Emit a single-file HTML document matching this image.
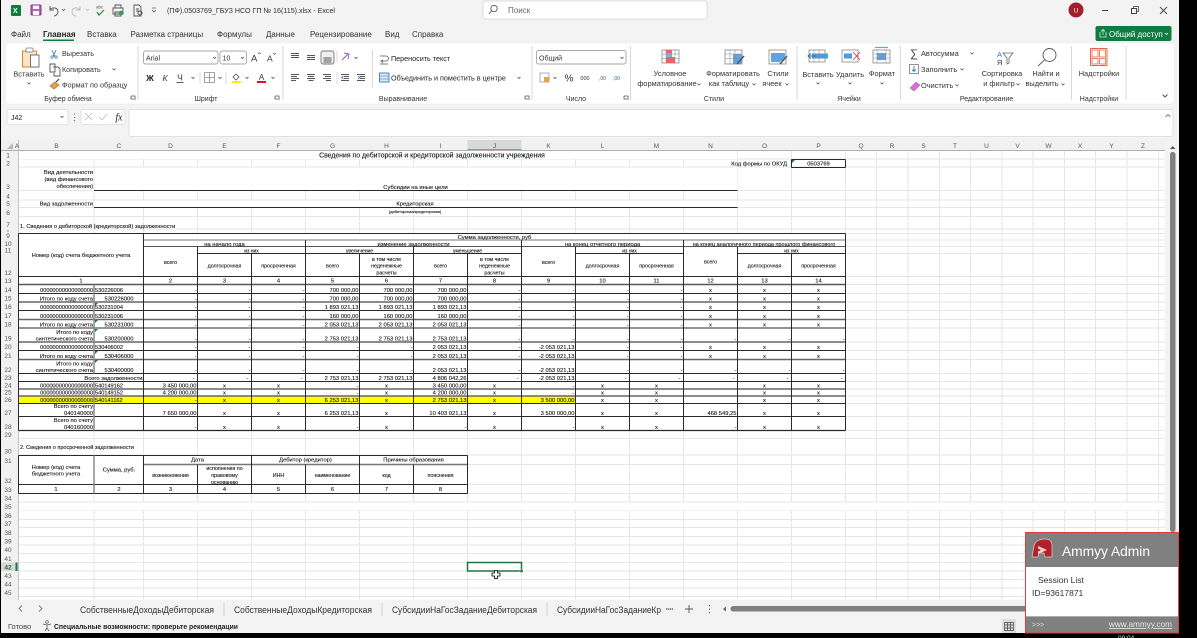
<!DOCTYPE html>
<html lang="ru"><head><meta charset="utf-8"><title>Excel</title>
<style>
html,body{margin:0;padding:0;background:#000;width:1197px;height:638px;overflow:hidden}
svg{display:block;filter:blur(.3px)}
text{font-family:"Liberation Sans","Noto Sans CJK SC",sans-serif;fill:#222;font-size:5.8px}
.r{text-anchor:end}.c{text-anchor:middle}
.mm text{font-size:8px;fill:#333}
.m text{font-size:7.4px;fill:#333}
.h text{font-size:6.5px;fill:#555;text-anchor:middle}
.g line{stroke:#e6e6e6;stroke-width:1}
.t line{stroke:#2a2a2a;stroke-width:1}
.i{fill:none;stroke:#555;stroke-width:.9}
.ch{fill:none;stroke:#555;stroke-width:.8}
.sp{stroke:#d8d8d8;stroke-width:1;fill:none}
.s text{fill:#111;stroke:#222;stroke-width:.12px}
</style></head><body>
<svg xmlns="http://www.w3.org/2000/svg" width="1197" height="638" viewBox="0 0 1197 638">
<rect width="1197" height="638" fill="#000"/>
<rect x="1" y="0" width="1178" height="633" fill="#f3f3f3"/>

<!-- title bar -->
<rect x="11" y="5" width="10" height="11" rx="1" fill="#107c41"/><text x="13" y="13" style="font-size:7px;font-weight:bold;fill:#fff">X</text>
<rect x="31" y="5" width="10" height="10" rx="1" fill="#b565b5" stroke="#8b2f8b"/><rect x="33" y="5.5" width="6" height="3.5" fill="#fff"/><rect x="33" y="11" width="6" height="4" fill="#fff"/>
<path class="i" d="M50 6v4h4M50 10c2-3 8-3 8 2 0 2-2 4-4 4" stroke-width="1.1"/>
<path class="ch" d="M62 9l1.5 1.5L65 9"/>
<path class="i" style="stroke:#bbb" d="M80 6v4h-4M80 10c-2-3-8-3-8 2 0 2 2 4 4 4"/>
<path class="ch" style="stroke:#bbb" d="M86 9l1.5 1.5L89 9"/>
<text x="96" y="8.5" style="font-size:4.5px;fill:#555">abc</text><path d="M97 12l2 3 5-5" fill="none" stroke="#2a8a3a" stroke-width="1.2"/>
<path class="i" d="M115 8V5h6v3M113 8h10v6h-10zM115 12h6v4h-6z"/><circle cx="121" cy="13" r="2.3" fill="#3a9a5a"/>
<path class="i" d="M134 5h5l2 2v9h-7zM136 9h3M136 11h3"/><circle cx="140" cy="13" r="2" fill="none" stroke="#555"/>
<path d="M152 8h4M152 10l2 2 2-2" fill="none" stroke="#555" stroke-width=".8"/>
<text x="167" y="13" textLength="168" lengthAdjust="spacingAndGlyphs" style="font-size:7.4px;fill:#333">(ПФ).0503769_ГБУЗ НСО ГП № 16(115).xlsx  -  Excel</text>
<rect x="483" y="1" width="224" height="18" rx="2" fill="#fff" stroke="#dcdcdc"/>
<circle cx="494" cy="8.5" r="3.2" class="i"/><path class="i" d="M491.5 11l-2.5 3"/>
<text x="508" y="13" style="font-size:8px;fill:#666">Поиск</text>
<circle cx="1076" cy="10" r="7.5" fill="#a11f2d"/><text x="1076" y="12.5" class="c" style="font-size:6.5px;fill:#fff">U</text>
<path d="M1102 10.500h6" stroke="#444" stroke-width="1"/>
<rect x="1131.500" y="8.500" width="5" height="5" fill="none" stroke="#444"/><path d="M1133.500 8.500v-2h5v5h-2" fill="none" stroke="#444" stroke-width=".8"/>
<path d="M1160 7l7 7M1167 7l-7 7" stroke="#444" stroke-width=".9"/>

<!-- menu -->
<g class="mm">
<text x="11" y="37">Файл</text><text x="43" y="37" style="font-weight:bold;fill:#222">Главная</text><text x="87" y="37">Вставка</text><text x="130.500" y="37">Разметка страницы</text><text x="217" y="37">Формулы</text><text x="266" y="37">Данные</text><text x="310" y="37">Рецензирование</text><text x="385" y="37">Вид</text><text x="412" y="37">Справка</text>
</g>
<rect x="43" y="39.500" width="31" height="1.500" fill="#107c41"/>
<rect x="1095.500" y="26" width="76" height="15" rx="2" fill="#107c41"/>
<path d="M1100 32v5h6v-5M1103 35v-5M1101 31.500l2-2 2 2" fill="none" stroke="#cfe8da" stroke-width=".8"/>
<text x="1109" y="37" style="font-size:8px;fill:#fff">Общий доступ</text><path d="M1165 33l1.500 1.500 1.500-1.500" fill="none" stroke="#fff" stroke-width=".8"/>

<!-- ribbon -->
<rect x="5.500" y="43" width="1169" height="61" rx="4" fill="#fff" stroke="#e8e8e8" stroke-width=".5"/>
<path class="sp" d="M138 46v54M283 46v54M532 46v54M630.500 46v54M797 46v54M900.500 46v54M1071.500 46v54M1126 46v54"/><path class="sp" d="M372.500 50v38M200 72v12M226 72v12M337 72v12M337 51v11"/>
<g class="m">
<!-- clipboard -->
<path d="M22.500 51h14v16h-14z" fill="#fbe3c4" stroke="#d08a30"/><rect x="26" y="48" width="7" height="4" rx="1" fill="#fff" stroke="#777" stroke-width=".7"/><rect x="30.500" y="55" width="8.500" height="12" fill="#fff" stroke="#555" stroke-width=".8"/>
<text x="29" y="76.500" class="c">Вставить</text><path class="ch" d="M27.500 82.500l1.500 1.500 1.500-1.500"/>
<path d="M52 50l3 7M56 50l-3 7" stroke="#356fa8" stroke-width=".8" fill="none"/><circle cx="52" cy="57" r="1.200" fill="none" stroke="#356fa8" stroke-width=".7"/><circle cx="56" cy="57" r="1.200" fill="none" stroke="#356fa8" stroke-width=".7"/>
<text x="62" y="56" style="font-size:7.200px">Вырезать</text>
<path class="i" d="M50 64h5v8h-5zM53 67h5l2 2v7h-6v-3"/>
<text x="62" y="72" style="font-size:7.200px">Копировать</text><path class="ch" d="M112.500 68.500l1.500 1.500 1.500-1.500"/>
<path d="M50 86l5-4 4 3-5 4z" fill="#e8a04a" stroke="#a85c10" stroke-width=".6"/><path d="M56 82l3-3" stroke="#444" stroke-width="1.200"/>
<text x="62" y="87.500" style="font-size:7.300px">Формат по образцу</text>
<text x="68" y="101" class="c" style="font-size:7px">Буфер обмена</text>
<path class="ch" d="M131 96h4v4M131 96v3h3"/>
<!-- font -->
<rect x="143.500" y="51" width="74.500" height="13" rx="2" fill="#fff" stroke="#8a8a8a" stroke-width=".7"/><text x="146" y="60.500" style="font-size:7px">Arial</text><path class="ch" d="M213 57l1.500 1.500 1.500-1.500"/>
<rect x="220" y="51" width="26.500" height="13" rx="2" fill="#fff" stroke="#8a8a8a" stroke-width=".7"/><text x="222.500" y="60.500" style="font-size:7px">10</text><path class="ch" d="M241 57l1.500 1.500 1.500-1.500"/>
<text x="251" y="61.500" style="font-size:9.500px">A</text><path d="M258 54l1.300-1.500 1.300 1.500" fill="none" stroke="#2b6cb0" stroke-width=".7"/>
<text x="267" y="61.500" style="font-size:8.500px">A</text><path d="M273 53l1.300 1.500 1.300-1.500" fill="none" stroke="#2b6cb0" stroke-width=".7"/>
<text x="150" y="81" class="c" style="font-weight:bold;font-size:8.500px;fill:#222">Ж</text><text x="165" y="81" class="c" style="font-style:italic;font-size:8.500px">К</text><text x="180" y="80.500" class="c" style="font-size:8.500px">Ч</text><path d="M176.500 82.500h7" stroke="#333" stroke-width=".8"/>
<path class="ch" d="M191.500 77l1.500 1.500 1.500-1.500M218.500 77l1.500 1.500 1.500-1.500M245.500 77l1.500 1.500 1.500-1.500M271.500 77l1.500 1.500 1.500-1.500"/>
<path d="M204.500 72.500h10v10h-10zM209.500 72.500v10M204.500 77.500h10" fill="none" stroke="#8a8a8a" stroke-width=".8"/>
<path d="M233 77l3-3 3 3-3 3z" fill="none" stroke="#555" stroke-width=".8"/><rect x="232" y="81" width="9" height="2" fill="#ffee00"/>
<text x="261.500" y="80" class="c" style="font-size:8px">A</text><rect x="257" y="81" width="9" height="2" fill="#d8141c"/>
<text x="206" y="101" class="c" style="font-size:7px">Шрифт</text><path class="ch" d="M275 96h4v4M275 96v3h3"/>
<!-- align -->
<g stroke="#555" stroke-width=".9" fill="none">
<path d="M291 53.500h8M291 55.500h8M291 57.500h8"/>
<path d="M307 55.500h8M307 57.500h8M307 59.500h8"/>
<rect x="321" y="51" width="13" height="13" rx="2" fill="#eee" stroke="#777"/><path d="M323.500 58h8M323.500 60h8M323.500 62h8"/>
<path d="M342 60l6-6M344 53l5 1-1 5" stroke="#8060a0"/><path class="ch" d="M354.500 57l1.500 1.500 1.500-1.500"/>
<path d="M291 74.500h8M291 76.500h6M291 78.500h8M291 80.500h5M307 74.500h8M308 76.500h6M307 78.500h8M308.500 80.500h5M323 74.500h8M325 76.500h6M323 78.500h8M326 80.500h5"/>
<path d="M341 74.500h8M344 76.500h5M344 78.500h5M341 80.500h8M357 74.500h8M360 76.500h5M360 78.500h5M357 80.500h8"/></g>
<path d="M343.500 76l-2 1.500 2 1.500M358 76l2 1.500-2 1.500" fill="none" stroke="#2b7cd3" stroke-width=".8"/>
<path d="M380 56h6a2 2 0 010 5h-4M380 64h8M383 60l-2 1 2 2" fill="none" stroke="#555" stroke-width=".8"/>
<text x="391" y="61" style="font-size:7.200px;fill:#222">Переносить текст</text>
<rect x="379.500" y="73" width="9.500" height="9" fill="#dbe9f8" stroke="#2b6cb0" stroke-width=".8"/><path d="M379.500 76h9.500M379.500 79h9.500" stroke="#2b6cb0" stroke-width=".6"/>
<text x="391" y="80.500" style="font-size:7.200px;fill:#222">Объединить и поместить в центре</text><path class="ch" d="M517.500 77l1.500 1.500 1.500-1.500"/>
<text x="403" y="101" class="c" style="font-size:7px">Выравнивание</text><path class="ch" d="M525 96h4v4M525 96v3h3"/>
<!-- number -->
<rect x="536.500" y="50.500" width="89.500" height="13.500" rx="2" fill="#fff" stroke="#8a8a8a" stroke-width=".7"/><text x="539" y="60.500" style="font-size:7px">Общий</text><path class="ch" d="M620.500 57l1.500 1.500 1.500-1.500"/>
<rect x="540" y="73" width="9" height="9" fill="#fff" stroke="#777" stroke-width=".6"/><rect x="544" y="77" width="5" height="5" fill="#e8a04a"/><path class="ch" d="M553.500 77l1.500 1.500 1.500-1.500"/>
<text x="569" y="81.500" class="c" style="font-size:10px">%</text><text x="585" y="80" class="c" style="font-size:5.500px">000</text>
<text x="599" y="80" style="font-size:5px;fill:#456">,00</text><text x="613" y="80" style="font-size:5px;fill:#2b6cb0">,00</text>
<text x="576" y="101" class="c" style="font-size:7px">Число</text><path class="ch" d="M624 96h4v4M624 96v3h3"/>
<!-- styles -->
<g><rect x="662" y="50" width="17" height="13" fill="#fff" stroke="#777" stroke-width=".7"/><rect x="666" y="50" width="6" height="3" fill="#f2626c"/><rect x="666" y="53" width="6" height="4" fill="#7cb8e8"/><rect x="666" y="57" width="9" height="6" fill="#f2626c"/><path d="M662 54h17M662 58.500h17M666 50v13M671 50v13M675 50v13" stroke="#888" stroke-width=".5"/></g>
<text x="670" y="76" class="c">Условное</text><text x="667" y="86" class="c">форматирование</text><path class="ch" d="M697.500 83.500l1.500 1.500 1.500-1.500"/>
<g><rect x="725" y="50" width="17" height="14" fill="#fff" stroke="#777" stroke-width=".7"/><rect x="733" y="54" width="9" height="10" fill="#5ea4e4"/><path d="M725 54h17M725 58.500h17M730 50v14M735 50v14" stroke="#888" stroke-width=".5"/><path d="M737 64l7-8" stroke="#555" stroke-width="1.500"/></g>
<text x="733" y="76" class="c">Форматировать</text><text x="729" y="86" class="c">как таблицу</text><path class="ch" d="M752.500 83.500l1.500 1.500 1.500-1.500"/>
<g><rect x="769" y="50" width="17" height="14" fill="#fff" stroke="#777" stroke-width=".7"/><path d="M771 53h14v5l-5 4h-9z" fill="#5ea4e4"/><path d="M780 64l7-8" stroke="#555" stroke-width="1.500"/></g>
<text x="778" y="76" class="c">Стили</text><text x="772" y="86" class="c">ячеек</text><path class="ch" d="M785.500 83.500l1.500 1.500 1.500-1.500"/>
<text x="714" y="101" class="c" style="font-size:7px">Стили</text>
<!-- cells -->
<rect x="809" y="50" width="16" height="12" fill="#fff" stroke="#777" stroke-width=".7"/><rect x="812" y="53.500" width="16" height="5" fill="#4a9de0"/><path d="M816 56h-7M811 53.500L808 56l3 2.500" fill="none" stroke="#1a6fb8" stroke-width=".9"/><path d="M809 54h16M809 58h16M814 50v12M819 50v12" stroke="#888" stroke-width=".5"/>
<text x="818" y="77" class="c">Вставить</text><path class="ch" d="M816.500 82.500l1.500 1.500 1.500-1.500"/>
<rect x="842" y="50" width="16" height="12" fill="#fff" stroke="#777" stroke-width=".7"/><rect x="844" y="53.500" width="8" height="5" fill="#4a9de0"/><path d="M853 52l7 8M860 52l-7 8" stroke="#e0303a" stroke-width=".8"/>
<text x="850" y="77" class="c">Удалить</text><path class="ch" d="M848.500 82.500l1.500 1.500 1.500-1.500"/>
<rect x="873" y="50" width="17" height="13" fill="#fff" stroke="#777" stroke-width=".7"/><rect x="877" y="53" width="9" height="7" fill="#5ea4e4"/><path d="M875 47.500h13" stroke="#5ea4e4" stroke-width="1.200"/><path d="M873 54h17M873 58h17M877 50v13M886 50v13" stroke="#888" stroke-width=".5"/>
<text x="882" y="76" class="c">Формат</text><path class="ch" d="M880.500 82.500l1.500 1.500 1.500-1.500"/>
<text x="849" y="101" class="c" style="font-size:7px">Ячейки</text>
<!-- editing -->
<text x="914" y="57" class="c" style="font-size:11px">∑</text><text x="921" y="56">Автосумма</text><path class="ch" d="M970.500 52.500l1.500 1.500 1.500-1.500"/>
<rect x="909.500" y="64.500" width="9" height="9" fill="#fff" stroke="#666" stroke-width=".7"/><path d="M914 66v5M912 69.500l2 2 2-2" fill="none" stroke="#2b7cd3" stroke-width=".9"/>
<text x="921" y="72">Заполнить</text><path class="ch" d="M960.500 68.500l1.500 1.500 1.500-1.500"/>
<path d="M910 88l6-6 4 3-6 6z" fill="#d86ed8" stroke="#a040a0" stroke-width=".5"/>
<text x="921" y="88">Очистить</text><path class="ch" d="M955.500 84.500l1.500 1.500 1.500-1.500"/>
<text x="997" y="57" style="font-size:7.500px;fill:#2b7cd3">А</text><text x="997" y="65" style="font-size:7.500px">Я</text><path d="M1003 53h10l-4 5v5l-2 1v-6z" fill="none" stroke="#666" stroke-width=".8"/>
<text x="1002" y="76" class="c">Сортировка</text><text x="999" y="86" class="c">и фильтр</text><path class="ch" d="M1016.500 83.500l1.500 1.500 1.500-1.500"/>
<circle cx="1049.500" cy="55" r="6.500" class="i"/><path class="i" d="M1044.500 60l-6.500 6"/>
<text x="1046" y="76" class="c">Найти и</text><text x="1042" y="86" class="c">выделить</text><path class="ch" d="M1061.500 83.500l1.500 1.500 1.500-1.500"/>
<text x="986.500" y="101" class="c" style="font-size:7px">Редактирование</text>
<!-- addins -->
<rect x="1090.500" y="48.500" width="16.500" height="17" fill="#fff" stroke="#e06a40"/><rect x="1092" y="50" width="6" height="7" fill="none" stroke="#e06a40" stroke-width=".8"/><rect x="1099.500" y="50" width="6" height="7" fill="none" stroke="#e06a40" stroke-width=".8"/><rect x="1092" y="58.500" width="6" height="5.500" fill="none" stroke="#e06a40" stroke-width=".8"/><rect x="1099.500" y="58.500" width="6" height="5.500" fill="none" stroke="#e06a40" stroke-width=".8"/>
<text x="1099" y="76" class="c">Надстройки</text><text x="1099" y="101" class="c" style="font-size:7px">Надстройки</text>
<path d="M1162.500 94.500l2.500 2.500 2.500-2.500" fill="none" stroke="#555"/>
</g>

<!-- formula bar -->
<rect x="7" y="109.500" width="61" height="15" rx="2" fill="#fff" stroke="#e0e0e0"/><text x="11" y="120" style="font-size:7px">J42</text><path class="ch" d="M60.500 116l1.500 1.500 1.500-1.500"/>
<path d="M74.500 113.500v1M74.500 117v1M74.500 120v1" stroke="#555"/>
<rect x="81" y="109.500" width="44" height="15" rx="2" fill="#fff" stroke="#e0e0e0"/>
<path d="M85 113l7 7M92 113l-7 7" stroke="#bbb" stroke-width=".8"/><path d="M99 117l3 3 5-6" fill="none" stroke="#bbb" stroke-width=".8"/>
<text x="119" y="120.500" class="c" style="font-family:'Liberation Serif',serif;font-style:italic;font-size:10px">fx</text>
<rect x="129" y="109.500" width="1044" height="27" rx="2" fill="#fff" stroke="#e0e0e0"/>
<path d="M1165.500 117l2.500-2.500 2.500 2.500" fill="none" stroke="#666" stroke-width=".8"/>

<!-- headers -->
<rect x="1" y="140" width="1164" height="11" fill="#f1f1f1"/>
<rect x="1" y="150" width="17" height="450" fill="#f1f1f1"/>
<rect x="18" y="151" width="1147" height="449" fill="#fff"/>
<rect x="467.500" y="140" width="54" height="10.500" fill="#d9d9d9"/>
<rect x="467.500" y="149.500" width="54" height="1.500" fill="#217346"/>
<rect x="1" y="562.500" width="17" height="8.500" fill="#d9d9d9"/><rect x="15.500" y="562.500" width="2" height="8.500" fill="#217346"/>
<path d="M13 149v-6l-6 6z" fill="#b5b5b5"/>
<path d="M1 150.500h1164" stroke="#b0b0b0"/><path d="M18.500 140v460" stroke="#c4c4c4"/>
<g class="h">
<text x="17" y="148">A</text><text x="56.500" y="148">B</text><text x="118.800" y="148">C</text><text x="170.500" y="148">D</text><text x="224.500" y="148">E</text><text x="278.500" y="148">F</text><text x="332.500" y="148">G</text><text x="386.500" y="148">H</text><text x="440.500" y="148">I</text><text x="494.500" y="148" style="fill:#1d6b40">J</text><text x="548.500" y="148">K</text><text x="602.500" y="148">L</text><text x="656.500" y="148">M</text><text x="710.500" y="148">N</text><text x="764.500" y="148">O</text><text x="818.500" y="148">P</text><text x="861" y="148">Q</text><text x="892" y="148">R</text><text x="923.500" y="148">S</text><text x="955" y="148">T</text><text x="986.500" y="148">U</text><text x="1017.500" y="148">V</text><text x="1048.500" y="148">W</text><text x="1080" y="148">X</text><text x="1111.500" y="148">Y</text><text x="1143" y="148">Z</text>
<text x="8" y="157.500">1</text><text x="8" y="165.500">2</text><text x="8" y="189">3</text><text x="8" y="198.500">4</text><text x="8" y="206">5</text><text x="8" y="215">6</text><text x="8" y="227">7</text><text x="8" y="232" style="font-size:3px">8</text><text x="8" y="238">9</text><text x="8" y="246">10</text><text x="8" y="252.500">11</text><text x="8" y="275">12</text><text x="8" y="283">13</text><text x="8" y="292">14</text><text x="8" y="300.500">15</text><text x="8" y="309">16</text><text x="8" y="318">17</text><text x="8" y="326.500">18</text><text x="8" y="340.500">19</text><text x="8" y="349">20</text><text x="8" y="358">21</text><text x="8" y="372">22</text><text x="8" y="380">23</text><text x="8" y="387.500">24</text><text x="8" y="394.500">25</text><text x="8" y="402">26</text><text x="8" y="415">27</text><text x="8" y="429">28</text><text x="8" y="437">29</text><text x="8" y="453.500">30</text><text x="8" y="463">31</text><text x="8" y="483">32</text><text x="8" y="492">33</text><text x="8" y="500.500">34</text><text x="8" y="509">35</text><text x="8" y="518">36</text><text x="8" y="526">37</text><text x="8" y="535">38</text><text x="8" y="543.500">39</text><text x="8" y="552">40</text><text x="8" y="561">41</text><text x="8" y="569.500" style="fill:#1d6b40;font-weight:bold">42</text><text x="8" y="578">43</text><text x="8" y="586.500">44</text><text x="8" y="595">45</text>
</g>

<!-- gridlines -->
<g class="g">
<line x1="94" x2="94" y1="151" y2="600"/><line x1="143.500" x2="143.500" y1="151" y2="600"/><line x1="197.500" x2="197.500" y1="151" y2="600"/><line x1="251.500" x2="251.500" y1="151" y2="600"/><line x1="305.500" x2="305.500" y1="151" y2="600"/><line x1="359.500" x2="359.500" y1="151" y2="600"/><line x1="413.500" x2="413.500" y1="151" y2="600"/><line x1="467.500" x2="467.500" y1="151" y2="600"/><line x1="521.500" x2="521.500" y1="151" y2="600"/><line x1="575.500" x2="575.500" y1="151" y2="600"/><line x1="629.500" x2="629.500" y1="151" y2="600"/><line x1="683.500" x2="683.500" y1="151" y2="600"/><line x1="737.500" x2="737.500" y1="151" y2="600"/><line x1="791.500" x2="791.500" y1="151" y2="600"/><line x1="845.500" x2="845.500" y1="151" y2="600"/><line x1="876.500" x2="876.500" y1="151" y2="600"/><line x1="908" x2="908" y1="151" y2="600"/><line x1="939.500" x2="939.500" y1="151" y2="600"/><line x1="970.500" x2="970.500" y1="151" y2="600"/><line x1="1002" x2="1002" y1="151" y2="600"/><line x1="1033" x2="1033" y1="151" y2="600"/><line x1="1064.500" x2="1064.500" y1="151" y2="600"/><line x1="1095.500" x2="1095.500" y1="151" y2="600"/><line x1="1127" x2="1127" y1="151" y2="600"/><line x1="1158.500" x2="1158.500" y1="151" y2="600"/>
<line x1="19" x2="1165" y1="159" y2="159"/><line x1="19" x2="1165" y1="167" y2="167"/><line x1="19" x2="1165" y1="190.500" y2="190.500"/><line x1="19" x2="1165" y1="200" y2="200"/><line x1="19" x2="1165" y1="207.500" y2="207.500"/><line x1="19" x2="1165" y1="216.500" y2="216.500"/><line x1="19" x2="1165" y1="229" y2="229"/><line x1="19" x2="1165" y1="233.500" y2="233.500"/><line x1="19" x2="1165" y1="240" y2="240"/><line x1="19" x2="1165" y1="246.500" y2="246.500"/><line x1="19" x2="1165" y1="253.500" y2="253.500"/><line x1="19" x2="1165" y1="276.500" y2="276.500"/><line x1="19" x2="1165" y1="284.500" y2="284.500"/><line x1="19" x2="1165" y1="293.500" y2="293.500"/><line x1="19" x2="1165" y1="302" y2="302"/><line x1="19" x2="1165" y1="310.500" y2="310.500"/><line x1="19" x2="1165" y1="319.500" y2="319.500"/><line x1="19" x2="1165" y1="328" y2="328"/><line x1="19" x2="1165" y1="342" y2="342"/><line x1="19" x2="1165" y1="350.500" y2="350.500"/><line x1="19" x2="1165" y1="359.500" y2="359.500"/><line x1="19" x2="1165" y1="373.500" y2="373.500"/><line x1="19" x2="1165" y1="381.500" y2="381.500"/><line x1="19" x2="1165" y1="389" y2="389"/><line x1="19" x2="1165" y1="396" y2="396"/><line x1="19" x2="1165" y1="403.500" y2="403.500"/><line x1="19" x2="1165" y1="416.500" y2="416.500"/><line x1="19" x2="1165" y1="430.500" y2="430.500"/><line x1="19" x2="1165" y1="438.500" y2="438.500"/><line x1="19" x2="1165" y1="455" y2="455"/><line x1="19" x2="1165" y1="464.500" y2="464.500"/><line x1="19" x2="1165" y1="484.500" y2="484.500"/><line x1="19" x2="1165" y1="493.500" y2="493.500"/><line x1="19" x2="1165" y1="502" y2="502"/><line x1="19" x2="1165" y1="510.500" y2="510.500"/><line x1="19" x2="1165" y1="519.500" y2="519.500"/><line x1="19" x2="1165" y1="527.500" y2="527.500"/><line x1="19" x2="1165" y1="536.500" y2="536.500"/><line x1="19" x2="1165" y1="545" y2="545"/><line x1="19" x2="1165" y1="553.500" y2="553.500"/><line x1="19" x2="1165" y1="562.500" y2="562.500"/><line x1="19" x2="1165" y1="571" y2="571"/><line x1="19" x2="1165" y1="579.500" y2="579.500"/><line x1="19" x2="1165" y1="588" y2="588"/><line x1="19" x2="1165" y1="596.500" y2="596.500"/>
</g>
<rect x="19" y="151" width="718" height="8" fill="#fff"/>
<rect x="94.500" y="167.500" width="643" height="23" fill="#fff"/>
<rect x="94.500" y="200.500" width="643" height="7" fill="#fff"/>
<rect x="19" y="233.500" width="826.500" height="197" fill="#fff"/>
<rect x="19" y="455" width="448.500" height="38.500" fill="#fff"/>
<rect x="19" y="502.500" width="1146" height="8" fill="#fff"/>
<rect x="19" y="396.500" width="556.500" height="7" fill="#ffff00"/>

<!-- table lines -->
<g class="t">
<line x1="94" x2="737.500" y1="190.500" y2="190.500"/><line x1="94" x2="737.500" y1="207.500" y2="207.500"/>
<line x1="18.500" x2="845.500" y1="233.500" y2="233.500"/><line x1="143.500" x2="845.500" y1="240" y2="240" style="stroke:#777"/><line x1="143.500" x2="845.500" y1="246.500" y2="246.500" style="stroke:#555"/>
<line x1="197.500" x2="521.500" y1="253.500" y2="253.500"/><line x1="575.500" x2="683.500" y1="253.500" y2="253.500"/><line x1="737.500" x2="845.500" y1="253.500" y2="253.500"/>
<line x1="18.500" x2="845.500" y1="276.500" y2="276.500"/><line x1="18.500" x2="845.500" y1="284.500" y2="284.500" style="stroke:#555;stroke-width:1.500"/>
<line x1="18.500" x2="845.500" y1="293.500" y2="293.500"/><line x1="18.500" x2="845.500" y1="302" y2="302" style="stroke:#666;stroke-width:1.500"/><line x1="18.500" x2="845.500" y1="310.500" y2="310.500"/><line x1="18.500" x2="845.500" y1="319.500" y2="319.500" style="stroke:#666;stroke-width:1.500"/><line x1="18.500" x2="845.500" y1="328" y2="328"/><line x1="18.500" x2="845.500" y1="342" y2="342" style="stroke:#666;stroke-width:1.500"/><line x1="18.500" x2="845.500" y1="350.500" y2="350.500"/><line x1="18.500" x2="845.500" y1="359.500" y2="359.500" style="stroke:#666;stroke-width:1.500"/><line x1="18.500" x2="845.500" y1="373.500" y2="373.500"/><line x1="18.500" x2="845.500" y1="381.500" y2="381.500"/><line x1="18.500" x2="845.500" y1="389" y2="389" style="stroke:#666;stroke-width:1.500"/><line x1="18.500" x2="845.500" y1="396" y2="396" style="stroke:#666;stroke-width:1.500"/><line x1="18.500" x2="845.500" y1="403.500" y2="403.500"/><line x1="18.500" x2="845.500" y1="416.500" y2="416.500"/><line x1="18.500" x2="845.500" y1="430.500" y2="430.500" style="stroke-width:1.300"/>
<line x1="18.500" x2="18.500" y1="233.500" y2="430.500"/>
<line x1="143.500" x2="143.500" y1="233.500" y2="430.500"/>
<line x1="197.500" x2="197.500" y1="246.500" y2="430.500"/>
<line x1="251.500" x2="251.500" y1="253.500" y2="430.500"/>
<line x1="305.500" x2="305.500" y1="240" y2="430.500"/>
<line x1="359.500" x2="359.500" y1="253.500" y2="430.500"/>
<line x1="413.500" x2="413.500" y1="246.500" y2="430.500"/>
<line x1="467.500" x2="467.500" y1="253.500" y2="430.500"/>
<line x1="521.500" x2="521.500" y1="240" y2="430.500"/>
<line x1="575.500" x2="575.500" y1="246.500" y2="430.500"/>
<line x1="629.500" x2="629.500" y1="253.500" y2="430.500"/>
<line x1="683.500" x2="683.500" y1="240" y2="430.500"/>
<line x1="737.500" x2="737.500" y1="246.500" y2="430.500"/>
<line x1="791.500" x2="791.500" y1="253.500" y2="430.500"/>
<line x1="845.500" x2="845.500" y1="233.500" y2="430.500"/>
<line x1="94" x2="94" y1="284.500" y2="373.500" style="stroke:#888;stroke-width:1.500"/><line x1="94" x2="94" y1="381.500" y2="430.500" style="stroke:#888;stroke-width:1.500"/>
<line x1="791.500" x2="845.500" y1="159.500" y2="159.500"/><line x1="791.500" x2="845.500" y1="167.500" y2="167.500"/><line x1="791.500" x2="791.500" y1="159.500" y2="167.500"/><line x1="845.500" x2="845.500" y1="159.500" y2="167.500"/>
<line x1="18.500" x2="467.500" y1="455.500" y2="455.500"/><line x1="143.500" x2="467.500" y1="464.500" y2="464.500" style="stroke:#777;stroke-width:1.500"/><line x1="18.500" x2="467.500" y1="484.500" y2="484.500"/><line x1="18.500" x2="467.500" y1="493.500" y2="493.500"/>
<line x1="18.500" x2="18.500" y1="455.500" y2="493.500"/><line x1="94" x2="94" y1="455.500" y2="493.500" style="stroke:#888;stroke-width:1.500"/><line x1="143.500" x2="143.500" y1="455.500" y2="493.500"/><line x1="197.500" x2="197.500" y1="464.500" y2="493.500"/><line x1="251.500" x2="251.500" y1="455.500" y2="493.500"/><line x1="305.500" x2="305.500" y1="464.500" y2="493.500"/><line x1="359.500" x2="359.500" y1="455.500" y2="493.500"/><line x1="413.500" x2="413.500" y1="464.500" y2="493.500"/><line x1="467.500" x2="467.500" y1="455.500" y2="493.500"/>
</g>
<path d="M792 160v3l3-3zM95 303v3l3-3zM95 329v3l3-3zM95 360v3l3-3zM95 320v3l3-3zM95 351v3l3-3z" fill="#1d7a3a"/>

<g class="s">
<!-- sheet text: header -->
<text x="432" y="157.500" class="c" style="font-size:6.900px">Сведения по дебиторской и кредиторской задолженности учреждения</text>
<text x="787" y="165.500" class="r">Код формы по ОКУД</text><text x="818.500" y="165.500" class="c">0503769</text>
<text x="93" y="174" class="r">Вид деятельности</text><text x="93" y="181" class="r">(вид финансового</text><text x="93" y="188" class="r">обеспечения)</text>
<text x="415.500" y="189" class="c">Субсидии на иные цели</text>
<text x="93" y="205.500" class="r">Вид задолженности</text><text x="415" y="205.500" class="c">Кредиторская</text>
<text x="415" y="213" class="c" style="font-size:4px">(дебиторская/кредиторская)</text>
<text x="20" y="228" style="font-size:5.700px">1. Сведения о дебиторской (кредиторской) задолженности</text>
<text x="494.500" y="239" class="c">Сумма задолженности, руб</text>
<text x="224.500" y="246" class="c">на начало года</text><text x="413.500" y="246" class="c">изменение задолженности</text><text x="602.500" y="246" class="c">на конец отчетного периода</text><text x="764" y="246" class="c" style="font-size:5.500px">на конец аналогичного периода прошлого финансового</text>
<text x="251.500" y="252.500" class="c" style="font-size:5px">из них</text><text x="359.500" y="252.500" class="c" style="font-size:5px">увеличение</text><text x="467.500" y="252.500" class="c" style="font-size:5px">уменьшение</text><text x="629.500" y="252.500" class="c" style="font-size:5px">из них</text><text x="791.500" y="252.500" class="c" style="font-size:5px">из них</text>
<text x="81" y="257" class="c">Номер (код) счета бюджетного учета</text>
<text x="170.500" y="264" class="c" style="font-size:5.300px">всего</text><text x="548.500" y="264" class="c" style="font-size:5.300px">всего</text><text x="710.500" y="263.500" class="c" style="font-size:5.300px">всего</text>
<text x="224.500" y="267.500" class="c" style="font-size:5.300px">долгосрочная</text><text x="278.500" y="267.500" class="c" style="font-size:5.300px">просроченная</text><text x="332.500" y="267.500" class="c" style="font-size:5.300px">всего</text><text x="440.500" y="267.500" class="c" style="font-size:5.300px">всего</text><text x="602.500" y="267.500" class="c" style="font-size:5.300px">долгосрочная</text><text x="656.500" y="267.500" class="c" style="font-size:5.300px">просроченная</text><text x="764.500" y="267.500" class="c" style="font-size:5.300px">долгосрочная</text><text x="818.500" y="267.500" class="c" style="font-size:5.300px">просроченная</text>
<text x="386.500" y="261" class="c" style="font-size:5.300px">в том числе</text><text x="386.500" y="267.500" class="c" style="font-size:5.300px">неденежные</text><text x="386.500" y="274.500" class="c" style="font-size:5.300px">расчеты</text>
<text x="494.500" y="261" class="c" style="font-size:5.300px">в том числе</text><text x="494.500" y="267.500" class="c" style="font-size:5.300px">неденежные</text><text x="494.500" y="274.500" class="c" style="font-size:5.300px">расчеты</text>

<g transform="translate(0,282.700)" text-anchor="middle"><text x="81">1</text><text x="170.500">2</text><text x="224.500">3</text><text x="278.500">4</text><text x="332.500">5</text><text x="386.500">6</text><text x="440.500">7</text><text x="494.500">8</text><text x="548.500">9</text><text x="602.500">10</text><text x="656.500">11</text><text x="710.500">12</text><text x="764.500">13</text><text x="818.500">14</text></g>

<!-- data rows -->
<g transform="translate(0,292)"><text x="93" class="r" style="font-size:5.600px">00000000000000000</text><text x="95" style="font-size:5.600px">530226006</text><text x="196.500" class="r">-</text><text x="250.500" class="r">-</text><text x="304.500" class="r">-</text><text x="358.500" class="r">700 000,00</text><text x="412.500" class="r">700 000,00</text><text x="466.500" class="r">700 000,00</text><text x="520.500" class="r">-</text><text x="574.500" class="r">-</text><text x="628.500" class="r">-</text><text x="682.500" class="r">-</text><text x="710.500" class="c">x</text><text x="764.500" class="c">x</text><text x="818.500" class="c">x</text></g>
<g transform="translate(0,300.700)"><text x="93" class="r">Итого по коду счета</text><text x="119" class="c">530226000</text><text x="196.500" class="r">-</text><text x="250.500" class="r">-</text><text x="304.500" class="r">-</text><text x="358.500" class="r">700 000,00</text><text x="412.500" class="r">700 000,00</text><text x="466.500" class="r">700 000,00</text><text x="520.500" class="r">-</text><text x="574.500" class="r">-</text><text x="628.500" class="r">-</text><text x="682.500" class="r">-</text><text x="710.500" class="c">x</text><text x="764.500" class="c">x</text><text x="818.500" class="c">x</text></g>
<g transform="translate(0,309)"><text x="93" class="r" style="font-size:5.600px">00000000000000000</text><text x="95" style="font-size:5.600px">530231004</text><text x="196.500" class="r">-</text><text x="250.500" class="r">-</text><text x="304.500" class="r">-</text><text x="358.500" class="r">1 893 021,13</text><text x="412.500" class="r">1 893 021,13</text><text x="466.500" class="r">1 893 021,13</text><text x="520.500" class="r">-</text><text x="574.500" class="r">-</text><text x="628.500" class="r">-</text><text x="682.500" class="r">-</text><text x="710.500" class="c">x</text><text x="764.500" class="c">x</text><text x="818.500" class="c">x</text></g>
<g transform="translate(0,318)"><text x="93" class="r" style="font-size:5.600px">00000000000000000</text><text x="95" style="font-size:5.600px">530231006</text><text x="196.500" class="r">-</text><text x="250.500" class="r">-</text><text x="304.500" class="r">-</text><text x="358.500" class="r">160 000,00</text><text x="412.500" class="r">160 000,00</text><text x="466.500" class="r">160 000,00</text><text x="520.500" class="r">-</text><text x="574.500" class="r">-</text><text x="628.500" class="r">-</text><text x="682.500" class="r">-</text><text x="710.500" class="c">x</text><text x="764.500" class="c">x</text><text x="818.500" class="c">x</text></g>
<g transform="translate(0,326.500)"><text x="93" class="r">Итого по коду счета</text><text x="119" class="c">530231000</text><text x="196.500" class="r">-</text><text x="250.500" class="r">-</text><text x="304.500" class="r">-</text><text x="358.500" class="r">2 053 021,13</text><text x="412.500" class="r">2 053 021,13</text><text x="466.500" class="r">2 053 021,13</text><text x="520.500" class="r">-</text><text x="574.500" class="r">-</text><text x="628.500" class="r">-</text><text x="682.500" class="r">-</text><text x="710.500" class="c">x</text><text x="764.500" class="c">x</text><text x="818.500" class="c">x</text></g>
<text x="93" y="334" class="r">Итого по коду</text>
<g transform="translate(0,340.500)"><text x="93" class="r">синтетического счета</text><text x="119" class="c">530200000</text><text x="196.500" class="r">-</text><text x="250.500" class="r">-</text><text x="304.500" class="r">-</text><text x="358.500" class="r">2 753 021,13</text><text x="412.500" class="r">2 753 021,13</text><text x="466.500" class="r">2 753 021,13</text><text x="520.500" class="r">-</text><text x="574.500" class="r">-</text><text x="628.500" class="r">-</text><text x="682.500" class="r">-</text><text x="736.500" class="r">-</text><text x="790.500" class="r">-</text><text x="844.500" class="r">-</text></g>
<g transform="translate(0,349)"><text x="93" class="r" style="font-size:5.600px">00000000000000000</text><text x="95" style="font-size:5.600px">530406002</text><text x="196.500" class="r">-</text><text x="250.500" class="r">-</text><text x="304.500" class="r">-</text><text x="358.500" class="r">-</text><text x="412.500" class="r">-</text><text x="466.500" class="r">2 053 021,13</text><text x="520.500" class="r">-</text><text x="574.500" class="r">-2 053 021,13</text><text x="628.500" class="r">-</text><text x="682.500" class="r">-</text><text x="710.500" class="c">x</text><text x="764.500" class="c">x</text><text x="818.500" class="c">x</text></g>
<g transform="translate(0,358)"><text x="93" class="r">Итого по коду счета</text><text x="119" class="c">530406000</text><text x="196.500" class="r">-</text><text x="250.500" class="r">-</text><text x="304.500" class="r">-</text><text x="358.500" class="r">-</text><text x="412.500" class="r">-</text><text x="466.500" class="r">2 053 021,13</text><text x="520.500" class="r">-</text><text x="574.500" class="r">-2 053 021,13</text><text x="628.500" class="r">-</text><text x="682.500" class="r">-</text><text x="710.500" class="c">x</text><text x="764.500" class="c">x</text><text x="818.500" class="c">x</text></g>
<text x="93" y="365.500" class="r">Итого по коду</text>
<g transform="translate(0,372)"><text x="93" class="r">синтетического счета</text><text x="119" class="c">530400000</text><text x="196.500" class="r">-</text><text x="250.500" class="r">-</text><text x="304.500" class="r">-</text><text x="358.500" class="r">-</text><text x="412.500" class="r">-</text><text x="466.500" class="r">2 053 021,13</text><text x="520.500" class="r">-</text><text x="574.500" class="r">-2 053 021,13</text><text x="628.500" class="r">-</text><text x="682.500" class="r">-</text><text x="736.500" class="r">-</text><text x="790.500" class="r">-</text><text x="844.500" class="r">-</text></g>
<g transform="translate(0,380)"><text x="142.500" class="r">Всего задолженности</text><text x="194.500" class="r">-</text><text x="248.500" class="r">-</text><text x="302.500" class="r">-</text><text x="358.500" class="r">2 753 021,13</text><text x="412.500" class="r">2 753 021,13</text><text x="466.500" class="r">4 806 042,26</text><text x="518.500" class="r">-</text><text x="574.500" class="r">-2 053 021,13</text><text x="626.500" class="r">-</text><text x="680.500" class="r">-</text><text x="734.500" class="r">-</text><text x="788.500" class="r">-</text><text x="842.500" class="r">-</text></g>
<g transform="translate(0,387.500)"><text x="93" class="r" style="font-size:5.600px">00000000000000000</text><text x="95" style="font-size:5.600px">540149162</text><text x="196.500" class="r">3 450 000,00</text><text x="224.500" class="c">x</text><text x="278.500" class="c">x</text><text x="358.500" class="r">-</text><text x="386.500" class="c">x</text><text x="466.500" class="r">3 450 000,00</text><text x="494.500" class="c">x</text><text x="574.500" class="r">-</text><text x="602.500" class="c">x</text><text x="656.500" class="c">x</text><text x="764.500" class="c">x</text><text x="818.500" class="c">x</text></g>
<g transform="translate(0,394.500)"><text x="93" class="r" style="font-size:5.600px">00000000000000000</text><text x="95" style="font-size:5.600px">540149152</text><text x="196.500" class="r">4 200 000,00</text><text x="224.500" class="c">x</text><text x="278.500" class="c">x</text><text x="358.500" class="r">-</text><text x="386.500" class="c">x</text><text x="466.500" class="r">4 200 000,00</text><text x="494.500" class="c">x</text><text x="574.500" class="r">-</text><text x="602.500" class="c">x</text><text x="656.500" class="c">x</text><text x="764.500" class="c">x</text><text x="818.500" class="c">x</text></g>
<g transform="translate(0,402)"><text x="93" class="r" style="font-size:5.600px">00000000000000000</text><text x="95" style="font-size:5.600px">540141162</text><text x="196.500" class="r">-</text><text x="224.500" class="c">x</text><text x="278.500" class="c">x</text><text x="358.500" class="r">6 253 021,13</text><text x="386.500" class="c">x</text><text x="466.500" class="r">2 753 021,13</text><text x="494.500" class="c">x</text><text x="574.500" class="r">3 500 000,00</text><text x="602.500" class="c">x</text><text x="656.500" class="c">x</text><text x="764.500" class="c">x</text><text x="818.500" class="c">x</text></g>
<text x="93" y="408" class="r">Всего по счету</text>
<g transform="translate(0,415)"><text x="93" class="r">040140000</text><text x="196.500" class="r">7 650 000,00</text><text x="224.500" class="c">x</text><text x="278.500" class="c">x</text><text x="358.500" class="r">6 253 021,13</text><text x="386.500" class="c">x</text><text x="466.500" class="r">10 403 021,13</text><text x="494.500" class="c">x</text><text x="574.500" class="r">3 500 000,00</text><text x="602.500" class="c">x</text><text x="656.500" class="c">x</text><text x="736.500" class="r">468 549,25</text><text x="764.500" class="c">x</text><text x="818.500" class="c">x</text></g>
<text x="93" y="422" class="r">Всего по счету</text>
<g transform="translate(0,429)"><text x="93" class="r">040160000</text><text x="196.500" class="r">-</text><text x="224.500" class="c">x</text><text x="278.500" class="c">x</text><text x="358.500" class="r">-</text><text x="386.500" class="c">x</text><text x="466.500" class="r">-</text><text x="494.500" class="c">x</text><text x="574.500" class="r">-</text><text x="602.500" class="c">x</text><text x="656.500" class="c">x</text><text x="736.500" class="r">-</text><text x="764.500" class="c">x</text><text x="818.500" class="c">x</text></g>

<!-- table 2 -->
<text x="20" y="449" style="font-size:5.500px">2. Сведения о просроченной задолженности</text>
<text x="56" y="469" class="c">Номер (код) счета</text><text x="56" y="475.500" class="c">бюджетного учета</text>
<text x="119" y="471.500" class="c">Сумма, руб.</text>
<text x="197.500" y="461.500" class="c">Дата</text><text x="305.500" y="461.500" class="c">Дебитор (кредитор)</text><text x="413.500" y="461.500" class="c">Причины образования</text>
<text x="170.500" y="477" class="c" style="font-size:5.300px">возникновения</text><text x="224.500" y="470" class="c" style="font-size:5.300px">исполнения по</text><text x="224.500" y="477" class="c" style="font-size:5.300px">правовому</text><text x="224.500" y="484" class="c" style="font-size:5.300px">основанию</text><text x="278.500" y="477" class="c" style="font-size:5.300px">ИНН</text><text x="332.500" y="477" class="c" style="font-size:5.300px">наименование</text><text x="386.500" y="477" class="c" style="font-size:5.300px">код</text><text x="440.500" y="477" class="c" style="font-size:5.300px">пояснения</text>
<g transform="translate(0,491)" text-anchor="middle"><text x="56">1</text><text x="119">2</text><text x="170.500">3</text><text x="224.500">4</text><text x="278.500">5</text><text x="332.500">6</text><text x="386.500">7</text><text x="440.500">8</text></g>
</g>

<!-- selection + cursor -->
<rect x="467.500" y="562.500" width="54" height="8.500" fill="none" stroke="#217346" stroke-width="1.500"/><rect x="520" y="569.500" width="3" height="3" fill="#217346" stroke="#fff" stroke-width=".4"/>
<path d="M494.500 570.500h3v2.500h2.500v3h-2.500v2.500h-3V576H492v-3h2.500z" fill="#fff" stroke="#000" stroke-width=".8"/>

<!-- v scrollbar -->
<rect x="1165" y="140" width="14" height="460" fill="#f3f3f3"/>
<path d="M1170 149l2.700-3 2.700 3z" fill="#555"/>
<rect x="1170" y="152" width="5.500" height="380" rx="2.500" fill="#808080"/>

<!-- tabs -->
<rect x="1" y="600" width="1178" height="33" fill="#f3f3f3"/>
<path d="M22 610l-3-3 3-3M39 604l3 3-3 3" fill="none" stroke="#777" stroke-width=".9" transform="translate(0,1.500)"/>
<text x="80" y="613" textLength="134" lengthAdjust="spacingAndGlyphs" style="font-size:9px;fill:#333">СобственныеДоходыДебиторская</text>
<text x="234" y="613" textLength="138" lengthAdjust="spacingAndGlyphs" style="font-size:9px;fill:#333">СобственныеДоходыКредиторская</text>
<text x="392" y="613" textLength="145" lengthAdjust="spacingAndGlyphs" style="font-size:9px;fill:#333">СубсидииНаГосЗаданиеДебиторская</text>
<text x="557" y="613" textLength="104" lengthAdjust="spacingAndGlyphs" style="font-size:9px;fill:#333">СубсидииНаГосЗаданиеКр</text>
<path d="M224 603v13M382 603v13M547 603v13" stroke="#d0d0d0"/>
<path d="M666 609h7" stroke="#444" stroke-width="1.300" stroke-dasharray="1.300 .7"/>
<path d="M689 605v8M685 609h8" stroke="#555" stroke-width=".9"/>
<path d="M709.500 605v1.200M709.500 608.500v1.200M709.500 612v1.200" stroke="#555"/>
<path d="M726 606.500l-3 2.500 3 2.500z" fill="#666"/>
<rect x="730.500" y="606" width="300" height="5.500" rx="2.700" fill="#808080"/>
<text x="8" y="629" style="font-size:7.500px;fill:#444">Готово</text>
<g fill="none" stroke="#555" stroke-width=".7"><circle cx="47" cy="622" r="1.300"/><path d="M43 624l4 1 4-1M47 625v3l-2 3M47 628l2 3"/></g>
<text x="54" y="629" textLength="184" lengthAdjust="spacingAndGlyphs" style="font-size:7.500px;font-weight:bold;fill:#222">Специальные возможности: проверьте рекомендации</text>
<rect x="1002" y="619" width="14" height="14" fill="#ddd"/><path d="M1004.500 622.500h9v8h-9zM1007.500 622.500v8M1010.500 622.500v8M1004.500 625h9M1004.500 628h9" fill="none" stroke="#444" stroke-width=".7"/>

<!-- ammyy -->
<rect x="1025.500" y="532.500" width="153" height="100.500" fill="#fff" stroke="#e63a3a"/>
<rect x="1026" y="533" width="152" height="34" fill="#808080"/>
<rect x="1026" y="616.500" width="152" height="16" fill="#808080"/><rect x="1026" y="616" width="152" height="1" fill="#b0b0b0"/>
<path d="M1032 557l2-11c1-5 6-7 11-7 5 0 7 3 7 7v11h-7l-1-4h-5l-1 4z" fill="#b2202a" stroke="#cfcfcf" stroke-width=".7"/>
<path d="M1038 546l9 4-9 4v-2.500l3-1.500-3-1.500z" fill="#f3d0d0"/>
<text x="1062" y="556" textLength="88" lengthAdjust="spacingAndGlyphs" style="font-size:13.500px;fill:#fff">Ammyy Admin</text>
<text x="1038" y="583" style="font-size:8.500px;fill:#333">Session List</text>
<text x="1032" y="596" style="font-size:8.500px;fill:#333">ID=93617871</text>
<text x="1032" y="627" style="font-size:7px;fill:#ddd">&gt;&gt;&gt;</text>
<text x="1172" y="627" class="r" style="font-size:8.200px;fill:#e8e8e8;text-decoration:underline">www.ammyy.com</text>
<text x="1118" y="640" style="font-size:6.500px;fill:#ddd">09:04</text>
</svg>
</body></html>
